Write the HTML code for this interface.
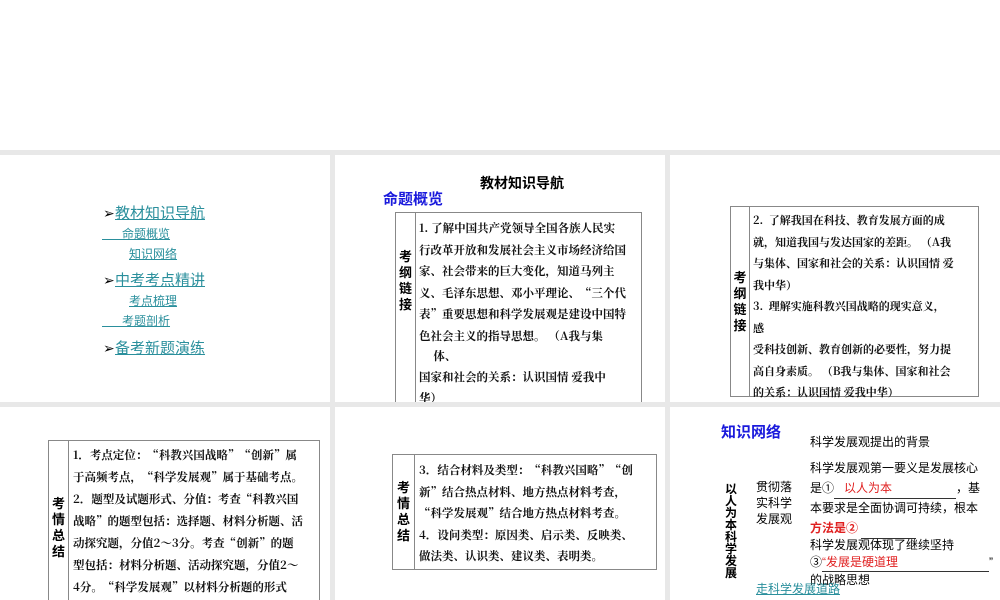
<!DOCTYPE html>
<html><head><meta charset="utf-8"><style>
*{margin:0;padding:0;box-sizing:border-box}
body{width:1000px;height:600px;overflow:hidden;background:#fff;position:relative;font-family:"Liberation Serif","Noto Serif CJK SC",serif}
.bg{position:absolute;left:0;top:150px;width:1000px;height:450px;background:#e8e8e8}
.s{position:absolute;background:#fff;overflow:hidden}
.a{position:absolute;white-space:nowrap}
.t{position:absolute;border:1px solid #888;background:#fff}
.lab{position:absolute;top:0;bottom:0;border-right:1px solid #888;font-family:"Liberation Sans","Noto Sans CJK SC",sans-serif;font-weight:bold;font-size:13px;line-height:16px;display:flex;align-items:center;justify-content:center;text-align:center}
.tx{position:absolute;font-size:11.5px;font-weight:bold;white-space:nowrap;color:#111;font-family:"Noto Serif CJK SC",serif}
.lk{color:#2a8f9c;text-decoration:underline;font-family:"Liberation Sans","Noto Sans CJK SC",sans-serif}
.blue{color:#1a1adc;font-weight:bold;font-family:"Liberation Sans","Noto Sans CJK SC",sans-serif;font-size:15px}
.sans{font-family:"Liberation Sans","Noto Sans CJK SC",sans-serif}
.ar{font-size:14px;color:#000;display:inline-block;width:12px}
</style></head><body>
<div class="bg"></div>

<div class="s" style="left:0;top:155px;width:330px;height:247px">
<div class="a" style="left:103px;top:47px;font-size:15px"><span class="ar">➢</span><span class="lk">教材知识导航</span></div>
<div class="a lk" style="left:102px;top:70px;font-size:12px">&nbsp;&nbsp;&nbsp;&nbsp;&nbsp;&nbsp;命题概览</div>
<div class="a lk" style="left:129px;top:90px;font-size:12px">知识网络</div>
<div class="a" style="left:103px;top:114px;font-size:15px"><span class="ar">➢</span><span class="lk">中考考点精讲</span></div>
<div class="a lk" style="left:129px;top:137px;font-size:12px">考点梳理</div>
<div class="a lk" style="left:102px;top:157px;font-size:12px">&nbsp;&nbsp;&nbsp;&nbsp;&nbsp;&nbsp;考题剖析</div>
<div class="a" style="left:103px;top:182px;font-size:15px"><span class="ar">➢</span><span class="lk">备考新题演练</span></div>
</div>

<div class="s" style="left:335px;top:155px;width:330px;height:247px">
<div class="a sans" style="left:145px;top:18px;font-size:14px;font-weight:bold">教材知识导航</div>
<div class="a blue" style="left:48px;top:33px">命题概览</div>
<div class="t" style="left:60px;top:57px;width:247px;height:200px">
<div class="lab" style="left:0;width:20px;align-items:flex-start;padding-top:36px">考<br>纲<br>链<br>接</div>
<div class="tx" style="left:23px;top:5px;line-height:21.6px">1. 了解中国共产党领导全国各族人民实<br>行改革开放和发展社会主义市场经济给国<br>家、社会带来的巨大变化，知道马列主<br>义、毛泽东思想、邓小平理论、“三个代<br>表”重要思想和科学发展观是建设中国特<br>色社会主义的指导思想。 （A我与集</div>
<div class="tx" style="left:23px;top:133px;line-height:21px">&nbsp;&nbsp;&nbsp;&nbsp;&nbsp;体、<br>国家和社会的关系：认识国情 爱我中<br>华）</div>
</div>
</div>

<div class="s" style="left:670px;top:155px;width:330px;height:247px">
<div class="t" style="left:60px;top:51px;width:249px;height:191px">
<div class="lab" style="left:0;width:19px">考<br>纲<br>链<br>接</div>
<div class="tx" style="left:22px;top:3px;line-height:21.5px;font-size:11px">2.&nbsp; 了解我国在科技、教育发展方面的成<br>就，知道我国与发达国家的差距。 （A我<br>与集体、国家和社会的关系：认识国情 爱<br>我中华）<br>3.&nbsp; 理解实施科教兴国战略的现实意义，<br>感<br>受科技创新、教育创新的必要性，努力提<br>高自身素质。 （B我与集体、国家和社会<br>的关系：认识国情 爱我中华）</div>
</div>
</div>

<div class="s" style="left:0;top:407px;width:330px;height:193px">
<div class="t" style="left:48px;top:33px;width:272px;height:180px">
<div class="lab" style="left:0;width:20px;align-items:flex-start;padding-top:55px">考<br>情<br>总<br>结</div>
<div class="tx" style="left:24px;top:3px;line-height:22px">1．考点定位：“科教兴国战略”“创新”属<br>于高频考点，“科学发展观”属于基础考点。<br>2．题型及试题形式、分值：考查“科教兴国<br>战略”的题型包括：选择题、材料分析题、活<br>动探究题，分值2～3分。考查“创新”的题<br>型包括：材料分析题、活动探究题，分值2～<br>4分。“科学发展观”以材料分析题的形式</div>
</div>
</div>

<div class="s" style="left:335px;top:407px;width:330px;height:193px">
<div class="t" style="left:57px;top:47px;width:265px;height:116px">
<div class="lab" style="left:0;width:22px">考<br>情<br>总<br>结</div>
<div class="tx" style="left:26px;top:5px;line-height:21.5px">3．结合材料及类型：“科教兴国略”“创<br>新”结合热点材料、地方热点材料考查，<br>“科学发展观”结合地方热点材料考查。<br>4．设问类型：原因类、启示类、反映类、<br>做法类、认识类、建议类、表明类。</div>
</div>
</div>

<div class="s sans" style="left:670px;top:407px;width:330px;height:193px">
<div class="a blue" style="left:51px;top:14px">知识网络</div>
<div class="a" style="left:55px;top:76px;font-size:12px;font-weight:bold;line-height:12px;white-space:normal;width:13px">以人为本科学发展</div>
<div class="a" style="left:86px;top:72px;font-size:12px;line-height:16px">贯彻落<br>实科学<br>发展观</div>
<div class="a" style="left:140px;top:26px;font-size:12px">科学发展观提出的背景</div>
<div class="a" style="left:140px;top:52px;font-size:12px;line-height:19.5px">科学发展观第一要义是发展核心<br>是①<span style="display:inline-block;width:122px;border-bottom:1px solid #333;color:#e02020;padding-left:10px">以人为本</span>，基<br>本要求是全面协调可持续，根本<br><span style="color:#e02020;font-weight:bold">方法是②</span> <span style="display:inline-block;width:55px;border-bottom:1px solid #333">&nbsp;</span></div>
<div class="a" style="left:140px;top:130px;font-size:12px;line-height:17px">科学发展观体现了继续坚持<br>③<span style="display:inline-block;width:167px;border-bottom:1px solid #333;color:#e02020">“发展是硬道理</span>”<br>的战略思想</div>
<div class="a lk" style="left:86px;top:173px;font-size:12px">走科学发展道路</div>
</div>
</body></html>
